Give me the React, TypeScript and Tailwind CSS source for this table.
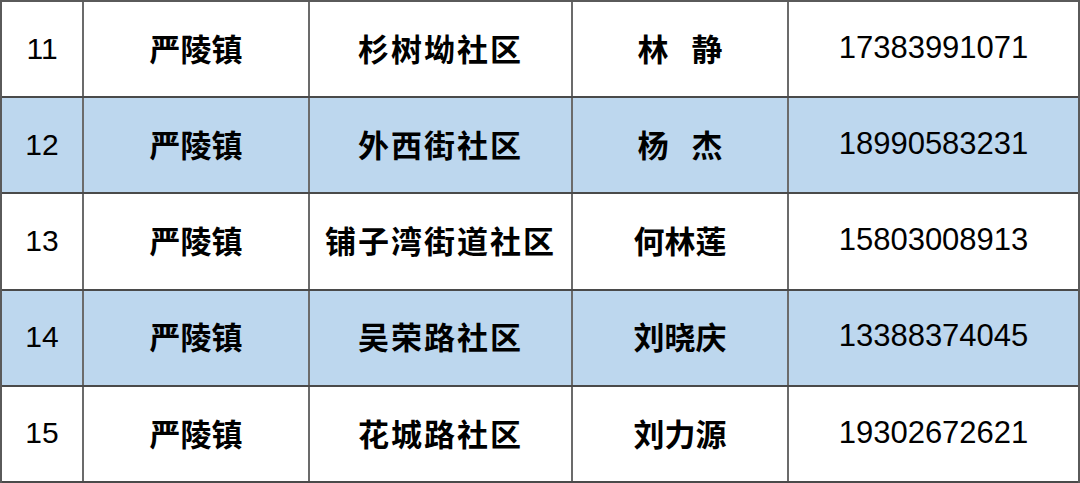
const rows = [
  { no: "11", town: "严陵镇", community: "杉树坳社区", name: ["林", "静"], phone: "17383991071" },
  { no: "12", town: "严陵镇", community: "外西街社区", name: ["杨", "杰"], phone: "18990583231" },
  { no: "13", town: "严陵镇", community: "铺子湾街道社区", name: ["何林莲"], phone: "15803008913" },
  { no: "14", town: "严陵镇", community: "吴荣路社区", name: ["刘晓庆"], phone: "13388374045" },
  { no: "15", town: "严陵镇", community: "花城路社区", name: ["刘力源"], phone: "19302672621" },
];

const latin = "font-['Liberation_Sans','Noto_Sans_CJK_SC',sans-serif]";
const cjk = "font-['Noto_Sans_CJK_SC',sans-serif] font-bold";

export default function App() {
  return (
    <div className="w-[1080px] h-[483px] bg-white text-black overflow-hidden">
      <div className="grid grid-rows-5 h-full border-t-2 border-l-2 border-r-2 border-[#5a5a5a]">
        {rows.map((r, i) => (
          <div
            key={r.no}
            className={`grid grid-cols-[82px_226px_263px_216px_1fr] border-b-2 border-[#4a4a4a] ${
              i % 2 === 1 ? "bg-[#bdd7ee]" : "bg-white"
            }`}
          >
            <div className={`flex items-center justify-center pb-[2px] border-r-2 border-[#6b6b6b] text-[30px] ${latin}`}>
              {r.no}
            </div>
            <div className={`flex items-center justify-center pb-[2px] border-r-2 border-[#6b6b6b] text-[31px] ${cjk}`}>
              {r.town}
            </div>
            <div className={`flex items-center justify-center pb-[2px] border-r-2 border-[#6b6b6b] text-[31px] tracking-[2px] ${cjk}`}>
              {r.community}
            </div>
            <div className={`flex items-center justify-center pb-[2px] border-r-2 border-[#6b6b6b] text-[31px] ${cjk}`}>
              {r.name.length === 2 ? (
                <>
                  <span>{r.name[0]}</span>
                  <span className="w-[23px]" />
                  <span>{r.name[1]}</span>
                </>
              ) : (
                r.name[0]
              )}
            </div>
            <div className={`flex items-center justify-center pb-[2px] text-[31px] ${latin}`}>
              {r.phone}
            </div>
          </div>
        ))}
      </div>
    </div>
  );
}
